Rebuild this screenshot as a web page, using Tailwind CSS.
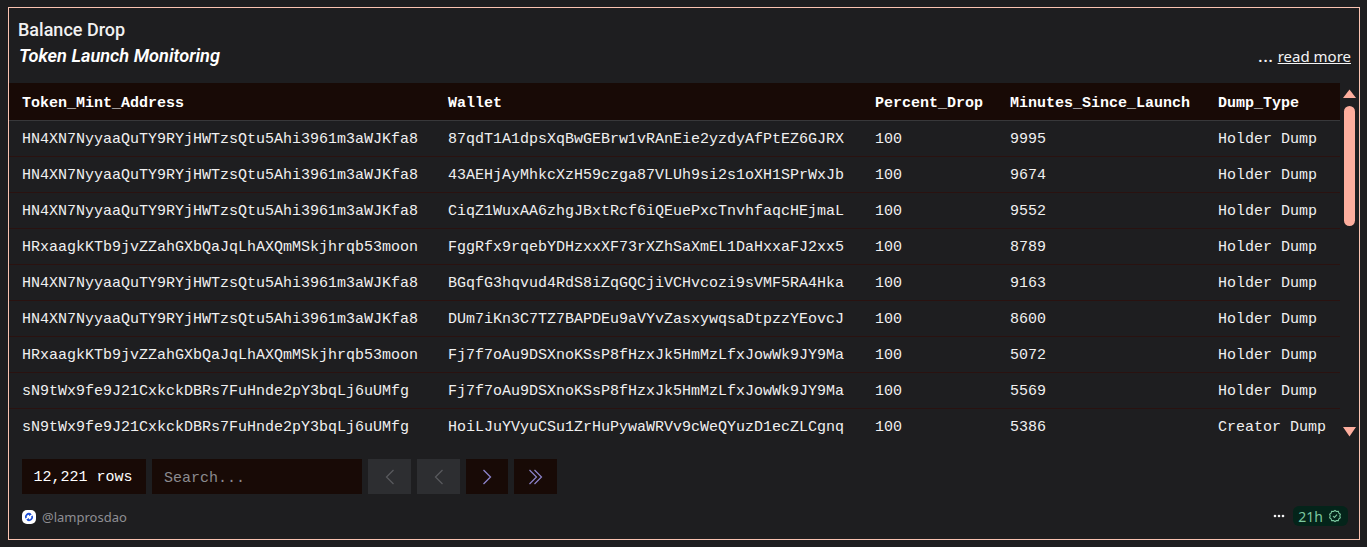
<!doctype html>
<html><head><meta charset="utf-8"><script src="https://cdn.jsdelivr.net/npm/@tailwindcss/browser@4"></script></head>
<body class="m-0 h-[547px] w-[1367px] overflow-hidden bg-[#1e1e20] font-['Noto_Sans',sans-serif] text-[#f4f4f5]">
<div class="mx-2 mt-[7px] flex h-[533px] w-[1352px] flex-col border border-[#fbc4b2]">
  <div class="flex h-[75px] items-start justify-between">
    <div class="pl-[9px] pt-[10px] font-['Roboto',sans-serif]">
      <div class="h-[26px] text-lg leading-6 font-medium text-[#f1f1f1]">Balance Drop</div>
      <div class="pl-[1px] text-[18.2px] leading-6 font-semibold italic text-white">Token Launch Monitoring</div>
    </div>
    <div class="pr-2 pt-9 text-[15px] leading-6 text-[#f4f4f5]"><span class="font-semibold tracking-[1px]">...</span> <a class="underline">read more</a></div>
  </div>
  <div class="flex h-[360px]">
    <div class="w-[1331px] font-['Liberation_Mono',monospace] text-[15px] text-[#f0f0f0]">
      <div class="flex h-[38px] items-center border-b border-[#38383a] bg-[#180a06] pt-[5px] font-bold text-white">
        <div class="w-[426px] pl-[13px]">Token_Mint_Address</div><div class="w-[427px] pl-[13px]">Wallet</div><div class="w-[135px] pl-[13px]">Percent_Drop</div><div class="w-[208px] pl-[13px]">Minutes_Since_Launch</div><div class="pl-[13px]">Dump_Type</div>
      </div>
      <div class="flex h-9 items-center border-b border-[#2a1210] pt-[3px]"><div class="w-[426px] pl-[13px]">HN4XN7NyyaaQuTY9RYjHWTzsQtu5Ahi3961m3aWJKfa8</div><div class="w-[427px] pl-[13px]">87qdT1A1dpsXqBwGEBrw1vRAnEie2yzdyAfPtEZ6GJRX</div><div class="w-[135px] pl-[13px]">100</div><div class="w-[208px] pl-[13px]">9995</div><div class="pl-[13px]">Holder Dump</div></div>
      <div class="flex h-9 items-center border-b border-[#2a1210] pt-[3px]"><div class="w-[426px] pl-[13px]">HN4XN7NyyaaQuTY9RYjHWTzsQtu5Ahi3961m3aWJKfa8</div><div class="w-[427px] pl-[13px]">43AEHjAyMhkcXzH59czga87VLUh9si2s1oXH1SPrWxJb</div><div class="w-[135px] pl-[13px]">100</div><div class="w-[208px] pl-[13px]">9674</div><div class="pl-[13px]">Holder Dump</div></div>
      <div class="flex h-9 items-center border-b border-[#2a1210] pt-[3px]"><div class="w-[426px] pl-[13px]">HN4XN7NyyaaQuTY9RYjHWTzsQtu5Ahi3961m3aWJKfa8</div><div class="w-[427px] pl-[13px]">CiqZ1WuxAA6zhgJBxtRcf6iQEuePxcTnvhfaqcHEjmaL</div><div class="w-[135px] pl-[13px]">100</div><div class="w-[208px] pl-[13px]">9552</div><div class="pl-[13px]">Holder Dump</div></div>
      <div class="flex h-9 items-center border-b border-[#2a1210] pt-[3px]"><div class="w-[426px] pl-[13px]">HRxaagkKTb9jvZZahGXbQaJqLhAXQmMSkjhrqb53moon</div><div class="w-[427px] pl-[13px]">FggRfx9rqebYDHzxxXF73rXZhSaXmEL1DaHxxaFJ2xx5</div><div class="w-[135px] pl-[13px]">100</div><div class="w-[208px] pl-[13px]">8789</div><div class="pl-[13px]">Holder Dump</div></div>
      <div class="flex h-9 items-center border-b border-[#2a1210] pt-[3px]"><div class="w-[426px] pl-[13px]">HN4XN7NyyaaQuTY9RYjHWTzsQtu5Ahi3961m3aWJKfa8</div><div class="w-[427px] pl-[13px]">BGqfG3hqvud4RdS8iZqGQCjiVCHvcozi9sVMF5RA4Hka</div><div class="w-[135px] pl-[13px]">100</div><div class="w-[208px] pl-[13px]">9163</div><div class="pl-[13px]">Holder Dump</div></div>
      <div class="flex h-9 items-center border-b border-[#2a1210] pt-[3px]"><div class="w-[426px] pl-[13px]">HN4XN7NyyaaQuTY9RYjHWTzsQtu5Ahi3961m3aWJKfa8</div><div class="w-[427px] pl-[13px]">DUm7iKn3C7TZ7BAPDEu9aVYvZasxywqsaDtpzzYEovcJ</div><div class="w-[135px] pl-[13px]">100</div><div class="w-[208px] pl-[13px]">8600</div><div class="pl-[13px]">Holder Dump</div></div>
      <div class="flex h-9 items-center border-b border-[#2a1210] pt-[3px]"><div class="w-[426px] pl-[13px]">HRxaagkKTb9jvZZahGXbQaJqLhAXQmMSkjhrqb53moon</div><div class="w-[427px] pl-[13px]">Fj7f7oAu9DSXnoKSsP8fHzxJk5HmMzLfxJowWk9JY9Ma</div><div class="w-[135px] pl-[13px]">100</div><div class="w-[208px] pl-[13px]">5072</div><div class="pl-[13px]">Holder Dump</div></div>
      <div class="flex h-9 items-center border-b border-[#2a1210] pt-[3px]"><div class="w-[426px] pl-[13px]">sN9tWx9fe9J21CxkckDBRs7FuHnde2pY3bqLj6uUMfg</div><div class="w-[427px] pl-[13px]">Fj7f7oAu9DSXnoKSsP8fHzxJk5HmMzLfxJowWk9JY9Ma</div><div class="w-[135px] pl-[13px]">100</div><div class="w-[208px] pl-[13px]">5569</div><div class="pl-[13px]">Holder Dump</div></div>
      <div class="flex h-9 items-center pt-[2px]"><div class="w-[426px] pl-[13px]">sN9tWx9fe9J21CxkckDBRs7FuHnde2pY3bqLj6uUMfg</div><div class="w-[427px] pl-[13px]">HoiLJuYVyuCSu1ZrHuPywaWRVv9cWeQYuzD1ecZLCgnq</div><div class="w-[135px] pl-[13px]">100</div><div class="w-[208px] pl-[13px]">5386</div><div class="pl-[13px]">Creator Dump</div></div>
    </div>
    <div class="flex w-[13px] flex-col items-center pl-[3px] pt-[6px] box-content">
      <svg class="h-[9px] w-[13px] shrink-0" viewBox="0 0 13 9"><path d="M6.5 0.5 13 9H0Z" fill="#fdae9e"/></svg>
      <div class="mt-2 h-[120px] w-[11px] shrink-0 rounded-md bg-[#fdae9e]"></div>
      <svg class="mt-[201px] h-[10px] w-[13px] shrink-0" viewBox="0 0 13 10"><path d="M0 0H13L6.5 9.5Z" fill="#fdae9e"/></svg>
    </div>
  </div>
  <div class="mt-4 flex h-[35px] gap-1.5 pl-[13px] font-['Liberation_Mono',monospace] text-[15px]">
    <div class="flex w-[124px] items-center justify-center bg-[#180a06] pr-[2px] pt-[3px] text-white">12,221 rows</div>
    <div class="flex w-[210px] items-center bg-[#180a06] pl-3 pt-[5px] text-[#8b8b8f]">Search...</div>
    <div class="flex w-[43px] items-center justify-center bg-[#2d2e31]"><svg class="h-4 w-[10px]" viewBox="0 0 10 16" fill="none" stroke="#58595d" stroke-width="1.300"><path d="M8.500 1 1.500 8l7 7"/></svg></div>
    <div class="flex w-[43px] items-center justify-center bg-[#2d2e31]"><svg class="h-4 w-[10px]" viewBox="0 0 10 16" fill="none" stroke="#58595d" stroke-width="1.300"><path d="M8.500 1 1.500 8l7 7"/></svg></div>
    <div class="flex w-[42px] items-center justify-center bg-[#180a06]"><svg class="h-4 w-[10px]" viewBox="0 0 10 16" fill="none" stroke="#8d84cc" stroke-width="1.300"><path d="m1.500 1 7 7-7 7"/></svg></div>
    <div class="flex w-[43px] items-center justify-center bg-[#180a06]"><svg class="h-4 w-[15px]" viewBox="0 0 15 16" fill="none" stroke="#8d84cc" stroke-width="1.200"><path d="m1.500 1 7 7-7 7M6.500 1l7 7-7 7"/></svg></div>
  </div>
  <div class="mt-3 flex items-center justify-between pl-[13px] pr-[11px]">
    <div class="flex items-center gap-1.5 text-[13px] leading-5 text-[#8e8e93]">
      <svg class="size-[14px]" viewBox="0 0 14 14"><rect width="14" height="14" rx="5" fill="#fff"/><path d="M4 8.200A3.200 3.200 0 0 1 8.500 4.200M10 5.800A3.200 3.200 0 0 1 5.500 9.800" fill="none" stroke="#1d4fd8" stroke-width="1.800"/><path d="M7.200 2.800 9.800 4.600 7 6ZM6.800 11.200 4.200 9.400 7 8Z" fill="#1d4fd8"/></svg>
      <span class="pt-[1px]">@lamprosdao</span>
    </div>
    <div class="-mt-[1px] flex items-center gap-2">
      <svg class="h-[4px] w-[12px]" viewBox="0 0 12 4"><circle cx="2" cy="2" r="1.300" fill="#f4f4f5"/><circle cx="6" cy="2" r="1.300" fill="#f4f4f5"/><circle cx="10" cy="2" r="1.300" fill="#f4f4f5"/></svg>
      <div class="flex h-5 w-[55px] items-center justify-center gap-[5px] rounded-md bg-[#04241a] pr-[1px] text-[14px] text-[#7cc8a0]"><span class="pt-[1px]">21h</span>
        <svg class="size-[14px]" viewBox="0 0 24 24" fill="none" stroke="#7cc8a0" stroke-width="1.800"><path d="M12 2.500l2.600 1.800 3.100-.2 1 3 2.500 1.900-1 3 1 3-2.500 1.900-1 3-3.100-.2-2.600 1.800-2.600-1.800-3.100.2-1-3-2.500-1.900 1-3-1-3 2.500-1.900 1-3 3.100.2z"/><path d="m8.500 12 2.500 2.500 4.500-5"/></svg>
      </div>
    </div>
  </div>
</div>
</body></html>
